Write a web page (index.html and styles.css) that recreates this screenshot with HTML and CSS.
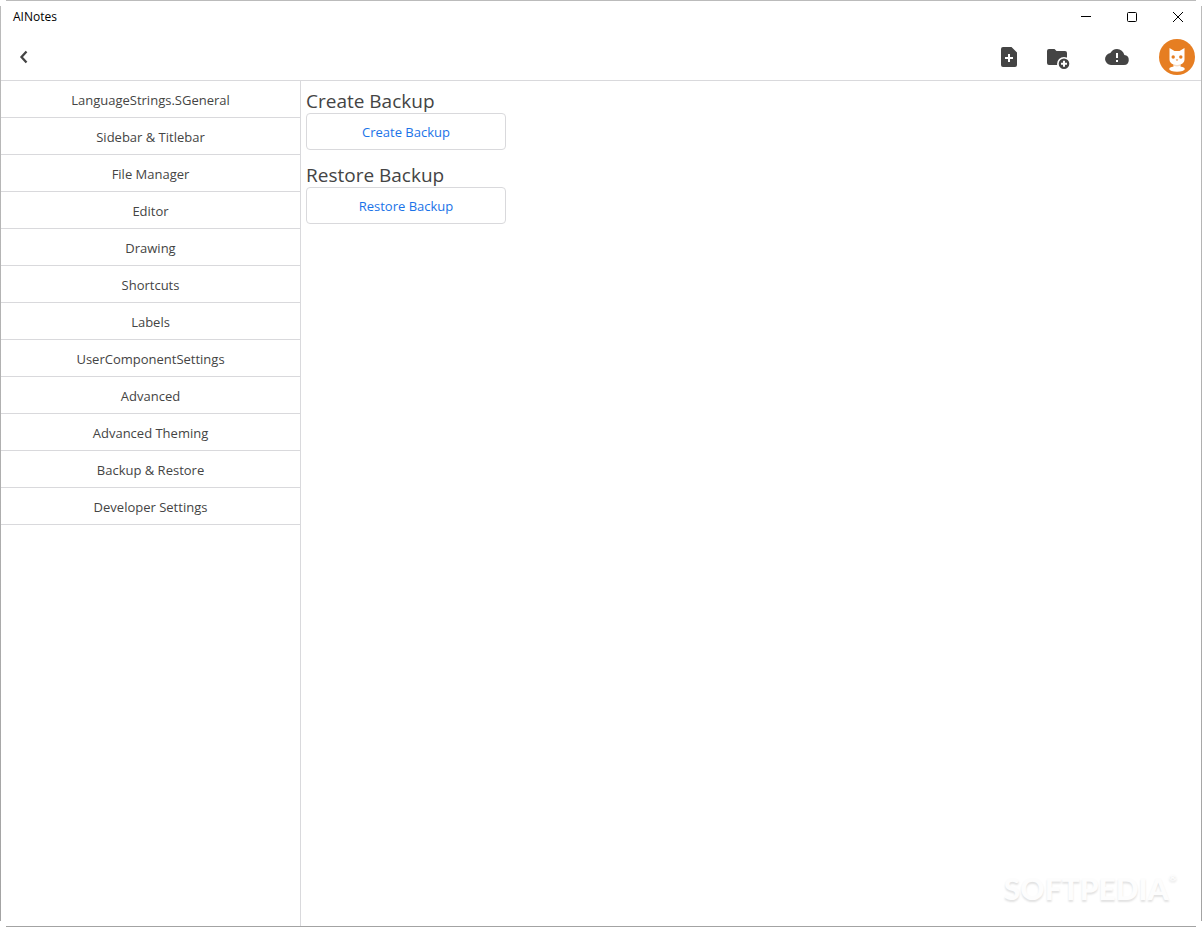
FILE: index.html
```html
<!DOCTYPE html>
<html lang="en">
<head>
<meta charset="utf-8">
<title>AINotes</title>
<link rel="stylesheet" href="styles.css">
</head>
<body>
<div class="window">
  <header class="titlebar">
    <span class="title">AINotes</span>
    <div class="captions">
      <button class="caption" aria-label="Minimize"><svg width="12" height="12" viewBox="0 0 12 12"><path d="M1 5.500h10"/></svg></button>
      <button class="caption" aria-label="Maximize"><svg width="12" height="12" viewBox="0 0 12 12"><rect x="1.5" y="1.5" width="9" height="9" rx="1"/></svg></button>
      <button class="caption" aria-label="Close"><svg width="12" height="12" viewBox="0 0 12 12"><path d="M1 1l10 10M11 1L1 11"/></svg></button>
    </div>
  </header>
  <div class="toolbar">
    <button class="tool back" aria-label="Back"><svg width="24" height="24" viewBox="0 0 24 24"><path d="M14.500 6.500L9.500 12l5 5.500" fill="none" stroke="#444" stroke-width="2.3"/></svg></button>
    <div class="actions">
      <button class="tool" aria-label="New file"><svg width="24" height="24" viewBox="0 0 24 24"><path fill-rule="evenodd" d="M6 2h8.500l5.500 5.500V20a2 2 0 0 1-2 2H6a2 2 0 0 1-2-2V4a2 2 0 0 1 2-2zM11 9v3H8v2h3v3h2v-3h3v-2h-3V9z"/></svg></button>
      <button class="tool" aria-label="New folder"><svg width="24" height="24" viewBox="0 0 24 24"><path d="M3 4h5.500l2 2H19a2 2 0 0 1 2 2v10a2 2 0 0 1-2 2H3a2 2 0 0 1-2-2V6a2 2 0 0 1 2-2z"/><circle cx="18" cy="19" r="7" fill="#fff"/><path fill-rule="evenodd" d="M18 13.500a5.300 5.300 0 1 0 0 10.600a5.300 5.300 0 0 0 0-10.600zM17 15.700h2v2h2v2h-2v2h-2v-2h-2v-2h2z"/></svg></button>
      <button class="tool cloud" aria-label="Sync status"><svg width="24" height="24" viewBox="0 0 24 24"><path d="M19.350 10.040A7.490 7.490 0 0 0 12 4C9.110 4 6.600 5.640 5.350 8.040A6 6 0 0 0 6 20h13a5 5 0 0 0 .35-9.960z"/><path fill="#fff" d="M11 8h2v5h-2zM11 15h2v2h-2z"/></svg></button>
      <button class="avatar" aria-label="Account"><svg width="36" height="36" viewBox="0 0 36 36"><circle cx="18" cy="18" r="18" fill="#e67e22"/><ellipse cx="18" cy="30" rx="7.800" ry="2.700" fill="#fff"/><path fill="#fff" d="M10.500 9l5 3h5l5-3v11.500c0 2.500-1.500 4-4 5v3h-7v-3c-2.500-1-4-2.500-4-5z"/><path d="M14.500 25.300c2 .9 5 .9 7 0l-.7 1.700c-1.700.6-3.900.6-5.600 0z" fill="#f6dcc4"/><circle cx="14.200" cy="18" r="1.700" fill="#e67e22"/><circle cx="21.800" cy="18" r="1.700" fill="#e67e22"/><path d="M16.700 20.500h2.600L18 22z" fill="#e67e22"/></svg></button>
    </div>
  </div>
  <div class="body">
    <nav class="sidebar">
      <button class="item">LanguageStrings.SGeneral</button>
      <button class="item">Sidebar &amp; Titlebar</button>
      <button class="item">File Manager</button>
      <button class="item">Editor</button>
      <button class="item">Drawing</button>
      <button class="item">Shortcuts</button>
      <button class="item">Labels</button>
      <button class="item">UserComponentSettings</button>
      <button class="item">Advanced</button>
      <button class="item">Advanced Theming</button>
      <button class="item">Backup &amp; Restore</button>
      <button class="item">Developer Settings</button>
    </nav>
    <main class="content">
      <h2 class="heading">Create Backup</h2>
      <button class="action">Create Backup</button>
      <h2 class="heading">Restore Backup</h2>
      <button class="action">Restore Backup</button>
    </main>
  </div>
  <div class="watermark">SOFTPEDIA<span class="reg">®</span></div>
</div>
</body>
</html>
```
FILE: styles.css
```css
* { box-sizing: border-box; }
body {
  margin: 0;
  font-family: "Open Sans", "Noto Sans", sans-serif;
  font-size: 13px;
  color: #444;
  background: #fff;
}
button {
  margin: 0;
  padding: 0;
  border: 0;
  background: none;
  font: inherit;
  color: inherit;
}
svg { display: block; fill: #444; }
.window {
  position: relative;
  display: flex;
  flex-direction: column;
  min-height: 100vh;
  padding: 1px;
  background:
    linear-gradient(#bbb, #bbb) 6px 0 / calc(100% - 12px) 1px no-repeat,
    linear-gradient(#a3a3a3, #a3a3a3) 6px 100% / calc(100% - 12px) 1px no-repeat,
    linear-gradient(#bbb, #a3a3a3) 0 6px / 1px calc(100% - 12px) no-repeat,
    linear-gradient(#bbb, #a3a3a3) 100% 6px / 1px calc(100% - 12px) no-repeat;
}
.titlebar {
  display: flex;
  justify-content: space-between;
  height: 32px;
  padding-left: 12px;
}
.title {
  font-size: 12px;
  line-height: 32px;
  color: #000;
}
.captions { display: flex; }
.caption {
  display: flex;
  align-items: center;
  justify-content: center;
  width: 46px;
}
.caption svg { fill: none; stroke: #000; }
.toolbar {
  display: flex;
  align-items: center;
  justify-content: space-between;
  height: 48px;
  padding: 0 6px 0 11px;
  border-bottom: 1px solid #d9d9dc;
}
.actions {
  display: flex;
  align-items: center;
  gap: 25px;
}
.tool svg { overflow: visible; }
.cloud { margin: 0 5px 0 10px; }
.body {
  display: flex;
  flex: 1;
}
.sidebar {
  display: flex;
  flex-direction: column;
  width: 300px;
  border-right: 1px solid #d9d9dc;
}
.item {
  height: 37px;
  padding-top: 2px;
  border-bottom: 1px solid #d9d9dc;
}
.content {
  flex: 1;
  padding: 5px;
}
.heading {
  height: 27px;
  margin: 0;
  font-size: 19px;
  font-weight: 400;
  line-height: 30px;
}
.action {
  display: block;
  width: 200px;
  height: 37px;
  margin-bottom: 10px;
  border: 1px solid #d9d9dc;
  border-radius: 4px;
  color: #1a73e8;
}
.watermark {
  position: absolute;
  right: 25px;
  bottom: 21px;
  display: flex;
  font-family: Lato, sans-serif;
  font-size: 30px;
  font-weight: 900;
  line-height: 36px;
  color: #fdfdfd;
  text-shadow: 0 2px 2px #e2e2e2;
}
.reg {
  font-size: 10px;
  line-height: 14px;
}
```
